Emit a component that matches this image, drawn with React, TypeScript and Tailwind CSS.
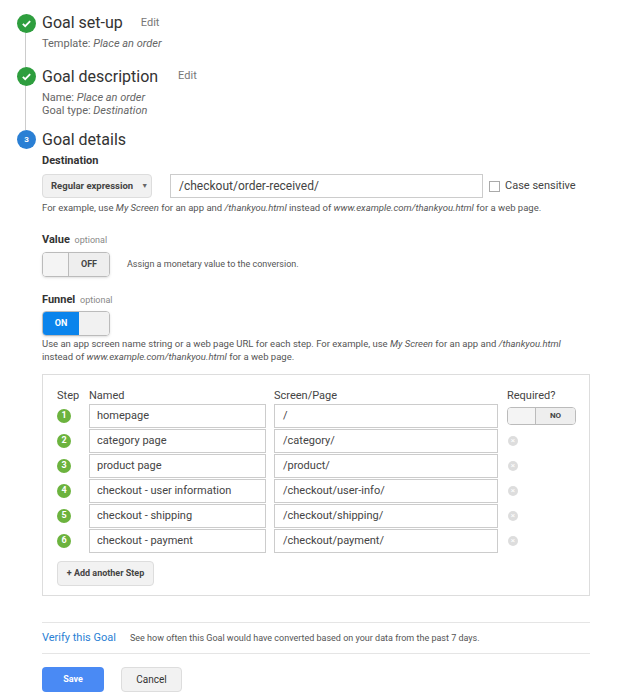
import React from "react";

const Check = () => (
  <div className="w-[19px] h-[19px] rounded-full bg-[#2e9e3e] flex items-center justify-center shrink-0">
    <svg width="11" height="11" viewBox="0 0 12 12"><path d="M2 6.3l2.6 2.6L10 3.5" stroke="#fff" strokeWidth="2" fill="none" /></svg>
  </div>
);

const rows = [
  ["homepage", "/"],
  ["category page", "/category/"],
  ["product page", "/product/"],
  ["checkout - user information", "/checkout/user-info/"],
  ["checkout - shipping", "/checkout/shipping/"],
  ["checkout - payment", "/checkout/payment/"],
];

export default function App() {
  return (
    <div className="w-[617px] h-[700px] bg-white text-[#333] relative overflow-hidden" style={{ fontFamily: "Roboto, 'Liberation Sans', sans-serif" }}>
      <div className="absolute left-[25px] top-[30px] w-px h-[100px] bg-[#ccc]" />
      <div className="relative pl-[17px] pt-[13px]">
        <div className="flex items-center gap-[6px] h-[20px]">
          <Check />
          <span className="text-[16px] text-[#333]">Goal set-up</span>
          <span className="text-[11px] text-[#777] ml-[12px]">Edit</span>
        </div>
        <div className="pl-[25px] text-[11px] text-[#666] mt-[3px]">Template: <i>Place an order</i></div>
        <div className="flex items-center gap-[6px] h-[20px] mt-[14px]">
          <Check />
          <span className="text-[16px] text-[#333]">Goal description</span>
          <span className="text-[11px] text-[#777] ml-[14px]">Edit</span>
        </div>
        <div className="pl-[25px] text-[11px] text-[#666] mt-[4px] leading-[13px]">
          <div>Name: <i>Place an order</i></div>
          <div>Goal type: <i>Destination</i></div>
        </div>
        <div className="flex items-center gap-[6px] h-[20px] mt-[13px]">
          <div className="w-[19px] h-[19px] rounded-full bg-[#2a7fd4] text-white text-[8px] font-bold flex items-center justify-center">3</div>
          <span className="text-[16px] text-[#333]">Goal details</span>
        </div>
      </div>
      <div className="pl-[42px] pr-[27px]">
        <div className="text-[11px] font-bold mt-[3px]">Destination</div>
        <div className="flex items-center mt-[5px]">
          <div className="w-[110px] h-[24px] bg-[#f1f1f1] border border-[#ddd] rounded-sm flex items-center pl-[8px] text-[9.5px] font-bold text-[#444]">
            Regular expression <span className="ml-[8px] text-[7px] text-[#666]">▼</span>
          </div>
          <div className="ml-[18px] w-[313px] h-[24px] border border-[#ccc] flex items-center pl-[8px] text-[12px] text-[#444]">/checkout/order-received/</div>
          <div className="ml-[6px] w-[11px] h-[11px] border border-[#aaa]" />
          <span className="ml-[5px] text-[11px] text-[#444]">Case sensitive</span>
        </div>
        <div className="text-[9.5px] text-[#555] mt-[3px]">For example, use <i>My Screen</i> for an app and <i>/thankyou.html</i> instead of <i>www.example.com/thankyou.html</i> for a web page.</div>

        <div className="mt-[17px] text-[11px]"><b>Value</b> <span className="text-[9px] text-[#888] ml-[2px]">optional</span></div>
        <div className="flex items-center mt-[3px]">
          <div className="w-[68px] h-[25px] border border-[#bbb] rounded-sm flex overflow-hidden shadow-sm">
            <div className="w-[26px] bg-[#f4f4f4] border-r border-[#bbb]" />
            <div className="flex-1 bg-[#eee] text-[9px] font-bold text-[#444] flex items-center justify-center">OFF</div>
          </div>
          <span className="ml-[17px] text-[9px] text-[#555]">Assign a monetary value to the conversion.</span>
        </div>

        <div className="mt-[15px] text-[11px]"><b>Funnel</b> <span className="text-[9px] text-[#888] ml-[2px]">optional</span></div>
        <div className="mt-[3px] w-[68px] h-[25px] border border-[#bbb] rounded-sm flex overflow-hidden shadow-sm">
          <div className="w-[36px] bg-[#0a84ec] text-white text-[9px] font-bold flex items-center justify-center">ON</div>
          <div className="flex-1 bg-[#f1f1f1]" />
        </div>
        <div className="text-[9.5px] text-[#555] mt-[1px] leading-[13px]">Use an app screen name string or a web page URL for each step. For example, use <i>My Screen</i> for an app and <i>/thankyou.html</i><br />instead of <i>www.example.com/thankyou.html</i> for a web page.</div>

        <div className="mt-[11px] border border-[#ddd] h-[222px] pl-[14px] pt-[13px]">
          <div className="flex text-[11px] text-[#444] h-[15px]">
            <span className="w-[32px]">Step</span>
            <span className="w-[185px]">Named</span>
            <span className="w-[233px]">Screen/Page</span>
            <span>Required?</span>
          </div>
          {rows.map(([n, p], i) => (
            <div key={i} className="flex items-center h-[25px]">
              <div className="w-[32px]">
                <div className="w-[14px] h-[14px] rounded-full bg-[#6cb33e] text-white text-[9px] font-bold flex items-center justify-center">{i + 1}</div>
              </div>
              <div className="w-[177px] h-[24px] border border-[#ccc] flex items-center pl-[7px] text-[11px] text-[#444]">{n}</div>
              <div className="ml-[8px] w-[224px] h-[24px] border border-[#ccc] flex items-center pl-[8px] text-[11px] text-[#444]">{p}</div>
              <div className="ml-[9px]">
                {i === 0 ? (
                  <div className="w-[69px] h-[18px] border border-[#bbb] rounded-sm flex overflow-hidden">
                    <div className="w-[28px] bg-[#f4f4f4] border-r border-[#bbb]" />
                    <div className="flex-1 bg-[#eee] text-[8px] font-bold text-[#444] flex items-center justify-center">NO</div>
                  </div>
                ) : (
                  <div className="w-[10px] h-[10px] rounded-full bg-[#ddd] text-white text-[8px] leading-[10px] flex items-center justify-center ml-[1px]">×</div>
                )}
              </div>
            </div>
          ))}
          <div className="mt-[8px] w-[97px] h-[25px] bg-[#f2f2f2] border border-[#ddd] rounded-sm flex items-center justify-center text-[9px] font-bold text-[#444]">+ Add another Step</div>
        </div>

        <div className="mt-[26px] border-t border-[#e5e5e5]" />
        <div className="flex items-center h-[30px]">
          <span className="text-[11px] text-[#2a7fd4]">Verify this Goal</span>
          <span className="ml-[14px] text-[9px] text-[#555]">See how often this Goal would have converted based on your data from the past 7 days.</span>
        </div>
        <div className="border-t border-[#e5e5e5]" />
        <div className="flex mt-[13px] gap-[17px]">
          <div className="w-[62px] h-[25px] bg-[#4a8af4] rounded-sm text-white text-[9px] font-bold flex items-center justify-center">Save</div>
          <div className="w-[61px] h-[25px] bg-[#f2f2f2] border border-[#ddd] rounded-sm text-[10px] text-[#333] flex items-center justify-center">Cancel</div>
        </div>
      </div>
    </div>
  );
}
